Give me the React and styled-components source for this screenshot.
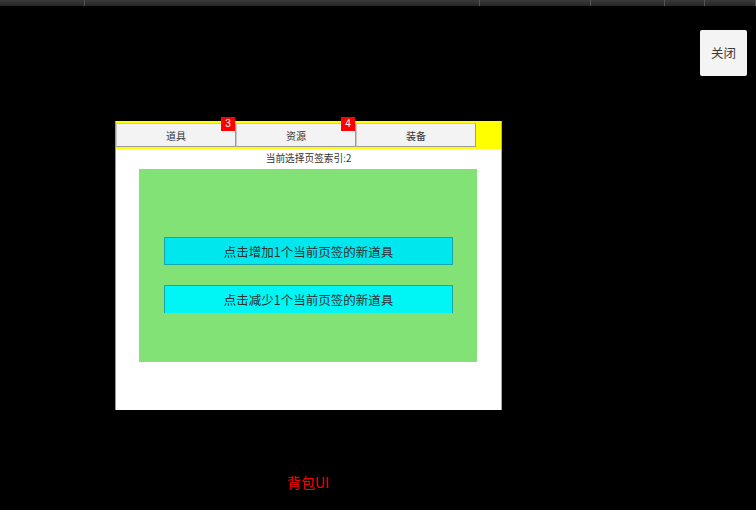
import React, { useState } from 'react';
import styled, { createGlobalStyle } from 'styled-components';

const GlobalStyle = createGlobalStyle`
	html, body {
		margin: 0;
		padding: 0;
		background: #000;
	}
	body {
		font-family: "Liberation Sans", "Noto Sans CJK SC", sans-serif;
	}
`;

const tabs = [
	{ name: '道具', count: 3 },
	{ name: '资源', count: 4 },
	{ name: '装备', count: 0 }
];

const stripSegments = [85, 395, 111, 74, 40, 51];

const App = () => {
	const [ active, setActive ] = useState(2);

	return (
		<Page>
			<GlobalStyle />
			<TopStrip>
				{stripSegments.map((w, i) => <StripSegment key={i} style={{ width: w }} />)}
			</TopStrip>

			<CloseRow>
				<CloseButton>关闭</CloseButton>
			</CloseRow>

			<Panel>
				<TabBar>
					{tabs.map((t, i) => (
						<Tab key={t.name} onClick={() => setActive(i)}>
							{t.name}
							{t.count > 0 && <Badge>{t.count}</Badge>}
						</Tab>
					))}
				</TabBar>
				<Body>
					<IndexLabel>当前选择页签索引:{active}</IndexLabel>
					<ItemArea>
						<ActionButton>点击增加1个当前页签的新道具</ActionButton>
						<ActionButton bright>点击减少1个当前页签的新道具</ActionButton>
					</ItemArea>
				</Body>
			</Panel>

			<Caption>背包UI</Caption>
		</Page>
	);
};

export default App;

const Page = styled.div`
	width: 756px;
	height: 510px;
	background: #000;
	display: flex;
	flex-direction: column;
	overflow: hidden;
`;

const TopStrip = styled.div`
	display: flex;
	height: 6px;
`;

const StripSegment = styled.div`
	height: 100%;
	background: linear-gradient(#3a3a3a, #262626);
	border-right: 1px solid #555;
	box-sizing: border-box;
`;

const CloseRow = styled.div`
	display: flex;
	justify-content: flex-end;
	padding: 24px 9px 0 0;
`;

const CloseButton = styled.button`
	width: 47px;
	height: 46px;
	background: #f4f4f4;
	border: none;
	border-radius: 2px;
	color: #3a3a3a;
	font-family: "Noto Sans CJK SC", sans-serif;
	font-size: 12.5px;
	padding: 0 0 2px 0;
`;

const Panel = styled.div`
	width: 387px;
	height: 289px;
	margin: 45px 0 0 115px;
	display: flex;
	flex-direction: column;
	background: #fff;
	border-left: 1px solid #9a9a9a;
	border-right: 1px solid #aaa;
	box-sizing: border-box;
`;

const TabBar = styled.div`
	display: flex;
	height: 28px;
	padding: 2px 0;
	background: #ffff00;
	box-sizing: border-box;
`;

const Tab = styled.div`
	position: relative;
	width: 120px;
	height: 24px;
	box-sizing: border-box;
	background: #f3f3f3;
	border: 1px solid #c8c8c8;
	border-right-color: #9a9a9a;
	border-bottom-color: #9a9a9a;
	display: flex;
	align-items: center;
	justify-content: center;
	font-family: "Noto Sans CJK SC", sans-serif;
	font-size: 10px;
	color: #333;
	cursor: pointer;
`;

const Badge = styled.span`
	position: absolute;
	top: -7px;
	right: 0;
	width: 14px;
	height: 14px;
	background: #ff0000;
	color: #fff;
	font-family: "Liberation Sans", sans-serif;
	font-size: 10px;
	line-height: 14px;
	text-align: center;
`;

const Body = styled.div`
	flex: 1;
	display: flex;
	flex-direction: column;
	padding-top: 2px;
`;

const IndexLabel = styled.div`
	height: 16px;
	text-align: center;
	font-family: "Noto Sans CJK SC", sans-serif;
	font-size: 9.7px;
	line-height: 14px;
	color: #333;
`;

const ItemArea = styled.div`
	width: 338px;
	height: 193px;
	margin: 2px 0 0 23px;
	background: #82e276;
	display: flex;
	flex-direction: column;
	gap: 20px;
	padding: 68px 0 0 25px;
	box-sizing: border-box;
`;

const ActionButton = styled.button`
	width: 289px;
	height: 28px;
	padding: 0;
	box-sizing: border-box;
	background: ${p => (p.bright ? '#00f5f5' : '#00e8ed')};
	border: 1px solid #1aa5ad;
	border-bottom: ${p => (p.bright ? 'none' : '1px solid #1aa5ad')};
	color: #333;
	font-family: "Noto Sans CJK SC", sans-serif;
	font-size: 12.5px;
`;

const Caption = styled.div`
	width: 386px;
	margin: 63px 0 0 115px;
	text-align: center;
	color: #ff0000;
	font-family: "Noto Sans CJK SC", sans-serif;
	font-size: 14px;
	line-height: 18px;
`;
